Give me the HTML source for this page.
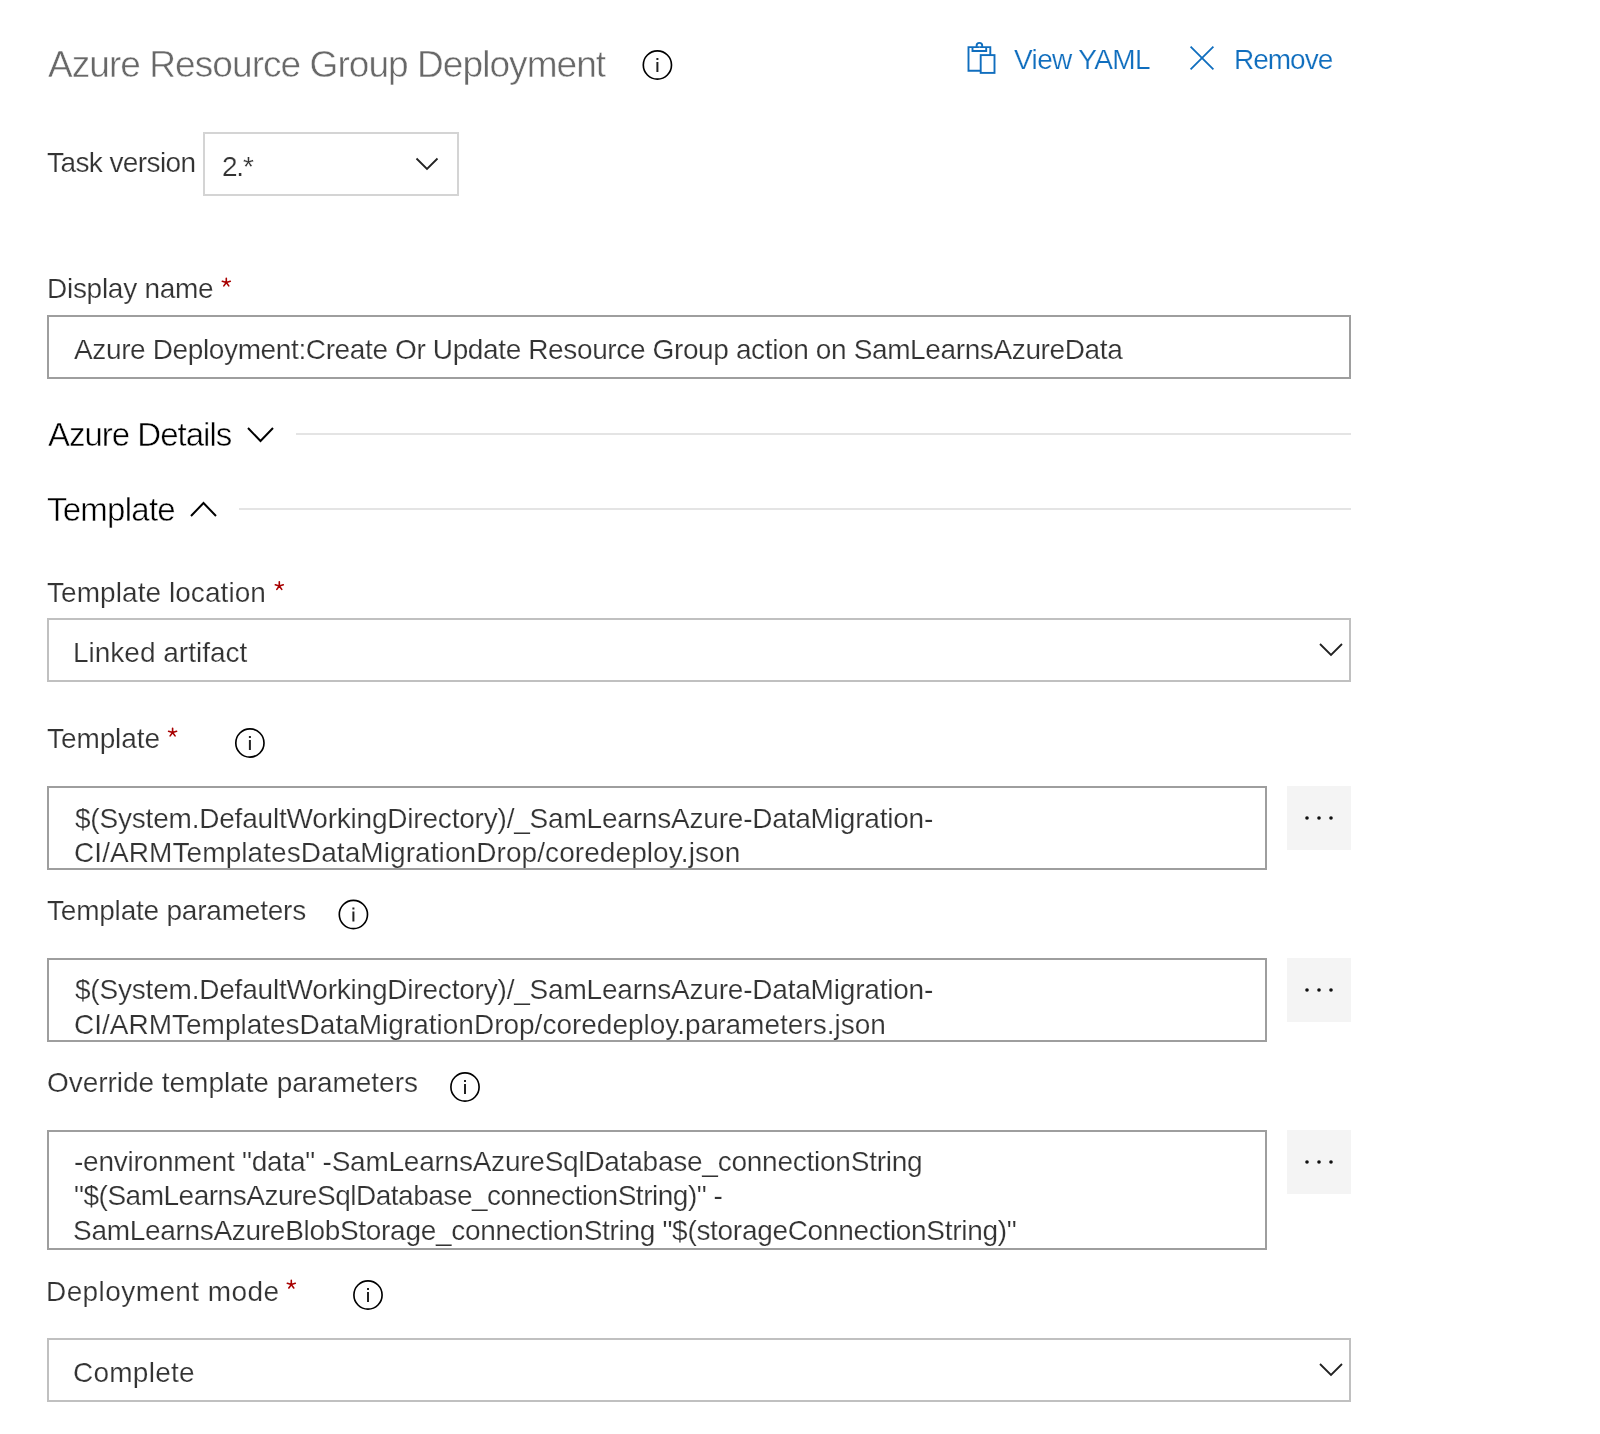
<!DOCTYPE html>
<html><head><meta charset="utf-8"><title>Azure Resource Group Deployment</title>
<style>
html,body{margin:0;padding:0;background:#fff;}
body{width:1600px;height:1434px;position:relative;overflow:hidden;font-family:"Liberation Sans",sans-serif;}
.b{position:absolute;box-sizing:content-box;}
.t{position:absolute;white-space:pre;font-family:"Liberation Sans",sans-serif;will-change:transform;-webkit-text-stroke:0.2px #fff;}
.h{-webkit-text-stroke:0.5px #fff;}
svg{position:absolute;left:0;top:0;}
</style></head><body>
<div class="b" style="left:203px;top:132px;width:252px;height:60px;border:2px solid #d4d4d4;background:#fff"></div>
<div class="b" style="left:47px;top:315px;width:1300px;height:60px;border:2px solid #9e9e9e;background:#fff"></div>
<div class="b" style="left:296px;top:433px;width:1055px;height:2px;background:#e4e4e4"></div>
<div class="b" style="left:239px;top:508px;width:1112px;height:2px;background:#e4e4e4"></div>
<div class="b" style="left:47px;top:618px;width:1300px;height:60px;border:2px solid #c0c0c0;background:#fff"></div>
<div class="b" style="left:47px;top:786px;width:1216px;height:80px;border:2px solid #9e9e9e;background:#fff"></div>
<div class="b" style="left:1287px;top:786px;width:64px;height:64px;background:#f4f4f4"></div>
<div class="b" style="left:47px;top:958px;width:1216px;height:80px;border:2px solid #9e9e9e;background:#fff"></div>
<div class="b" style="left:1287px;top:958px;width:64px;height:64px;background:#f4f4f4"></div>
<div class="b" style="left:47px;top:1130px;width:1216px;height:116px;border:2px solid #9e9e9e;background:#fff"></div>
<div class="b" style="left:1287px;top:1130px;width:64px;height:64px;background:#f4f4f4"></div>
<div class="b" style="left:47px;top:1338px;width:1300px;height:60px;border:2px solid #c0c0c0;background:#fff"></div>
<div class="t h" style="left:48.00px;top:46.00px;font-size:37px;line-height:37px;letter-spacing:-0.933px;color:#686868">Azure Resource Group Deployment</div>
<div class="t" style="left:1014.00px;top:46.00px;font-size:28px;line-height:28px;letter-spacing:-0.625px;color:#106ebe">View YAML</div>
<div class="t" style="left:1234.00px;top:46.00px;font-size:28px;line-height:28px;letter-spacing:-1.000px;color:#106ebe">Remove</div>
<div class="t" style="left:46.50px;top:149.00px;font-size:28px;line-height:28px;letter-spacing:-0.591px;color:#333333">Task version</div>
<div class="t" style="left:221.80px;top:152.60px;font-size:28px;line-height:28px;letter-spacing:-1.200px;color:#333333">2.*</div>
<div class="t" style="left:46.75px;top:274.75px;font-size:28px;line-height:28px;letter-spacing:-0.273px;color:#333333">Display name</div>
<div class="t" style="left:74.00px;top:336.00px;font-size:28px;line-height:28px;letter-spacing:-0.371px;color:#333333">Azure Deployment:Create Or Update Resource Group action on SamLearnsAzureData</div>
<div class="t h" style="left:48.00px;top:418.40px;font-size:33px;line-height:33px;letter-spacing:-1.000px;color:#000000">Azure Details</div>
<div class="t h" style="left:47.00px;top:492.75px;font-size:33px;line-height:33px;letter-spacing:-0.743px;color:#000000">Template</div>
<div class="t" style="left:47.00px;top:578.50px;font-size:28px;line-height:28px;letter-spacing:0.062px;color:#333333">Template location</div>
<div class="t" style="left:73.00px;top:638.50px;font-size:28px;line-height:28px;letter-spacing:0.000px;color:#333333">Linked artifact</div>
<div class="t" style="left:46.80px;top:724.80px;font-size:28px;line-height:28px;letter-spacing:-0.086px;color:#333333">Template</div>
<div class="t" style="left:74.50px;top:804.75px;font-size:28px;line-height:28px;letter-spacing:-0.200px;color:#333333">$(System.DefaultWorkingDirectory)/_SamLearnsAzure-DataMigration-</div>
<div class="t" style="left:73.50px;top:838.80px;font-size:28px;line-height:28px;letter-spacing:0.081px;color:#333333">CI/ARMTemplatesDataMigrationDrop/coredeploy.json</div>
<div class="t" style="left:46.90px;top:897.00px;font-size:28px;line-height:28px;letter-spacing:-0.211px;color:#333333">Template parameters</div>
<div class="t" style="left:74.50px;top:976.25px;font-size:28px;line-height:28px;letter-spacing:-0.200px;color:#333333">$(System.DefaultWorkingDirectory)/_SamLearnsAzure-DataMigration-</div>
<div class="t" style="left:73.50px;top:1010.70px;font-size:28px;line-height:28px;letter-spacing:0.000px;color:#333333">CI/ARMTemplatesDataMigrationDrop/coredeploy.parameters.json</div>
<div class="t" style="left:46.50px;top:1069.00px;font-size:28px;line-height:28px;letter-spacing:-0.037px;color:#333333">Override template parameters</div>
<div class="t" style="left:74.40px;top:1147.60px;font-size:28px;line-height:28px;letter-spacing:-0.239px;color:#333333">-environment &quot;data&quot; -SamLearnsAzureSqlDatabase_connectionString</div>
<div class="t" style="left:74.40px;top:1182.40px;font-size:28px;line-height:28px;letter-spacing:-0.483px;color:#333333">&quot;$(SamLearnsAzureSqlDatabase_connectionString)&quot; -</div>
<div class="t" style="left:72.50px;top:1216.60px;font-size:28px;line-height:28px;letter-spacing:-0.300px;color:#333333">SamLearnsAzureBlobStorage_connectionString &quot;$(storageConnectionString)&quot;</div>
<div class="t" style="left:46.00px;top:1277.50px;font-size:28px;line-height:28px;letter-spacing:0.414px;color:#333333">Deployment mode</div>
<div class="t" style="left:72.75px;top:1359.00px;font-size:28px;line-height:28px;letter-spacing:0.243px;color:#333333">Complete</div>
<svg width="1600" height="1434" viewBox="0 0 1600 1434">
<circle cx="657.4" cy="65" r="14.1" fill="none" stroke="#000" stroke-width="1.65"/>
<rect x="656.4" y="62" width="2" height="10" fill="#222"/>
<rect x="656.4" y="58" width="2" height="2" fill="#222"/>
<circle cx="249.9" cy="743" r="14.1" fill="none" stroke="#000" stroke-width="1.65"/>
<rect x="248.9" y="740" width="2" height="10" fill="#222"/>
<rect x="248.9" y="736" width="2" height="2" fill="#222"/>
<circle cx="353.4" cy="914.5" r="14.1" fill="none" stroke="#000" stroke-width="1.65"/>
<rect x="352.4" y="911.5" width="2" height="10" fill="#222"/>
<rect x="352.4" y="907.5" width="2" height="2" fill="#222"/>
<circle cx="465" cy="1087" r="14.1" fill="none" stroke="#000" stroke-width="1.65"/>
<rect x="464" y="1084" width="2" height="10" fill="#222"/>
<rect x="464" y="1080" width="2" height="2" fill="#222"/>
<circle cx="368" cy="1295" r="14.1" fill="none" stroke="#000" stroke-width="1.65"/>
<rect x="367" y="1292" width="2" height="10" fill="#222"/>
<rect x="367" y="1288" width="2" height="2" fill="#222"/>
<path d="M416.5,158.5 L427.0,169 L437.5,158.5" fill="none" stroke="#222" stroke-width="1.8"/>
<path d="M1320,644 L1331.0,655 L1342,644" fill="none" stroke="#222" stroke-width="1.8"/>
<path d="M1320,1364 L1331.0,1375 L1342,1364" fill="none" stroke="#222" stroke-width="1.8"/>
<path d="M248,428 L260.5,441 L273,428" fill="none" stroke="#000" stroke-width="2"/>
<path d="M191,516 L203.5,503 L216,516" fill="none" stroke="#000" stroke-width="2"/>
<path d="M226.3,282.5 L226.30,278.30 M226.3,282.5 L230.29,281.20 M226.3,282.5 L228.77,285.90 M226.3,282.5 L223.83,285.90 M226.3,282.5 L222.31,281.20 " stroke="#a80000" stroke-width="1.6" stroke-linecap="round" fill="none"/>
<path d="M279.3,586.0 L279.30,581.80 M279.3,586.0 L283.29,584.70 M279.3,586.0 L281.77,589.40 M279.3,586.0 L276.83,589.40 M279.3,586.0 L275.31,584.70 " stroke="#a80000" stroke-width="1.6" stroke-linecap="round" fill="none"/>
<path d="M172.6,732.5 L172.60,728.30 M172.6,732.5 L176.59,731.20 M172.6,732.5 L175.07,735.90 M172.6,732.5 L170.13,735.90 M172.6,732.5 L168.61,731.20 " stroke="#a80000" stroke-width="1.6" stroke-linecap="round" fill="none"/>
<path d="M291.3,1284.6 L291.30,1280.40 M291.3,1284.6 L295.29,1283.30 M291.3,1284.6 L293.77,1288.00 M291.3,1284.6 L288.83,1288.00 M291.3,1284.6 L287.31,1283.30 " stroke="#a80000" stroke-width="1.6" stroke-linecap="round" fill="none"/>
<circle cx="1307" cy="818" r="1.8" fill="#111"/>
<circle cx="1319" cy="818" r="1.8" fill="#111"/>
<circle cx="1331" cy="818" r="1.8" fill="#111"/>
<circle cx="1307" cy="990" r="1.8" fill="#111"/>
<circle cx="1319" cy="990" r="1.8" fill="#111"/>
<circle cx="1331" cy="990" r="1.8" fill="#111"/>
<circle cx="1307" cy="1162" r="1.8" fill="#111"/>
<circle cx="1319" cy="1162" r="1.8" fill="#111"/>
<circle cx="1331" cy="1162" r="1.8" fill="#111"/>
<path d="M979.7,47.1 H968.5 V70.7 H980.7" fill="none" stroke="#106ebe" stroke-width="1.9"/>
<path d="M979.7,47.1 H990.3 V55" fill="none" stroke="#106ebe" stroke-width="1.9"/>
<path d="M972.5,47 V51 H986.2 V47" fill="none" stroke="#106ebe" stroke-width="1.9"/>
<path d="M976.6,47.5 V45.7 A2.8,2.8 0 0 1 982.2,45.7 V47.5" fill="none" stroke="#106ebe" stroke-width="1.9"/>
<rect x="980.7" y="55.1" width="13.8" height="17.8" fill="#fff" stroke="#106ebe" stroke-width="1.9"/>
<path d="M1190.6,46.6 L1213.4,69.4 M1213.4,46.6 L1190.6,69.4" stroke="#106ebe" stroke-width="1.8" fill="none"/>
</svg>
</body></html>
